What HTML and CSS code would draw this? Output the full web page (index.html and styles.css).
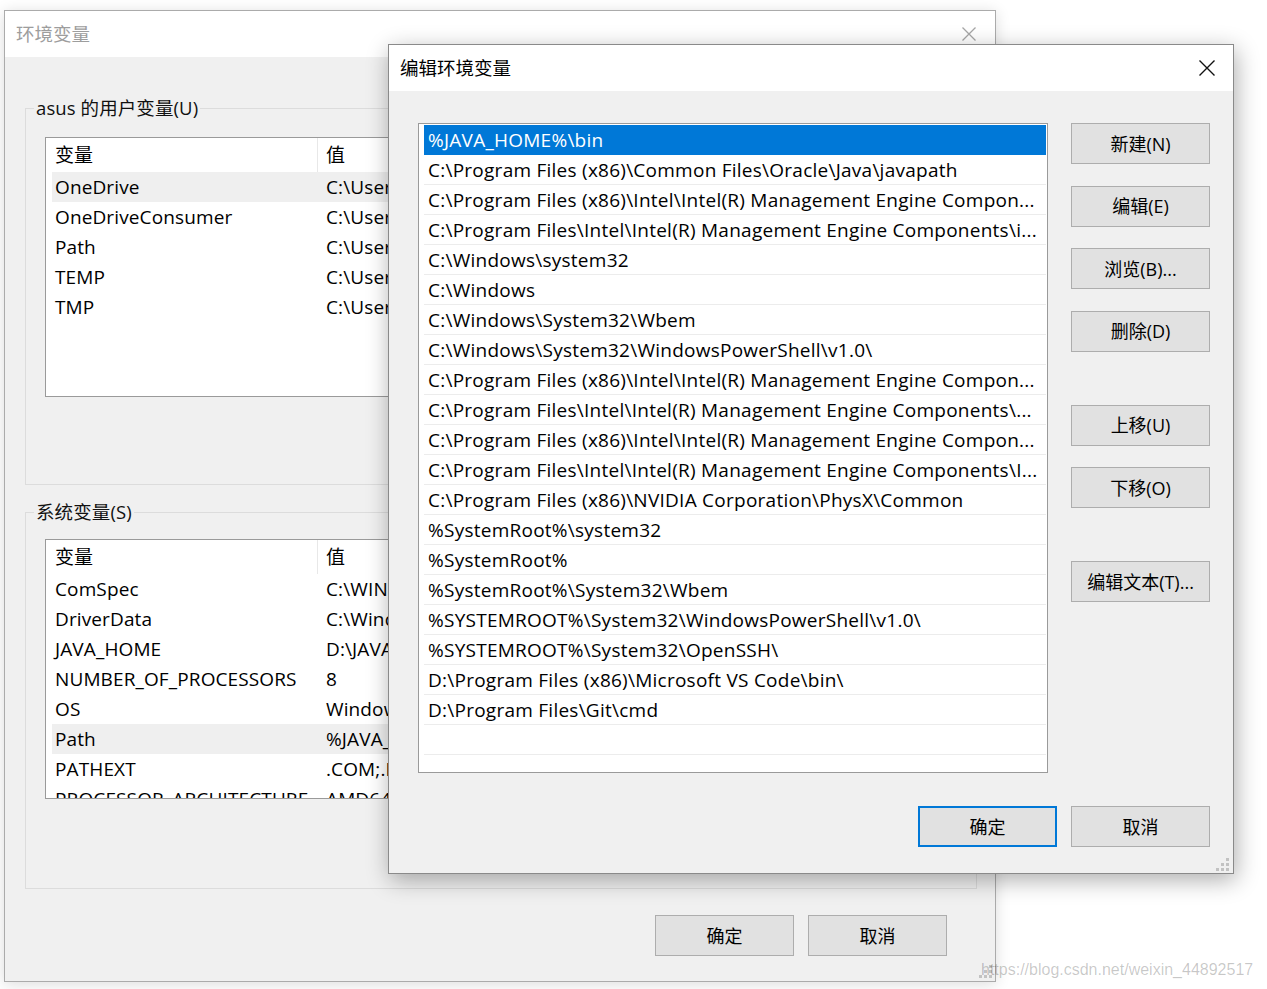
FILE: index.html
```html
<!DOCTYPE html>
<html lang="zh-CN">
<head>
<meta charset="utf-8">
<title>环境变量</title>
<link rel="stylesheet" href="styles.css">
</head>
<body>
<div class="desktop">

  <div class="win win-back">
    <div class="titlebar">
      <span class="title">环境变量</span>
      <svg class="close close-back" viewBox="0 0 14 14"><path d="M0.5 0.5L13.5 13.5M13.5 0.5L0.5 13.5" /></svg>
    </div>
    <div class="back-body">
      <fieldset class="group group-user">
        <legend>asus 的用户变量(U)</legend>
        <div class="listview">
          <div class="lv-head"><div class="h1">变量</div><div class="h2">值</div></div>
          <div class="lv-row hl"><span class="c1">OneDrive</span><span class="c2">C:\Users\asus\OneDrive</span></div>
          <div class="lv-row"><span class="c1">OneDriveConsumer</span><span class="c2">C:\Users\asus\OneDrive</span></div>
          <div class="lv-row"><span class="c1">Path</span><span class="c2">C:\Users\asus\AppData\Local\Microsoft\WindowsApps</span></div>
          <div class="lv-row"><span class="c1">TEMP</span><span class="c2">C:\Users\asus\AppData\Local\Temp</span></div>
          <div class="lv-row"><span class="c1">TMP</span><span class="c2">C:\Users\asus\AppData\Local\Temp</span></div>
        </div>
      </fieldset>
      <fieldset class="group group-sys">
        <legend>系统变量(S)</legend>
        <div class="listview">
          <div class="lv-head"><div class="h1">变量</div><div class="h2">值</div></div>
          <div class="lv-row"><span class="c1">ComSpec</span><span class="c2">C:\WINDOWS\system32\cmd.exe</span></div>
          <div class="lv-row"><span class="c1">DriverData</span><span class="c2">C:\Windows\System32\Drivers\DriverData</span></div>
          <div class="lv-row"><span class="c1">JAVA_HOME</span><span class="c2">D:\JAVA\jdk1.8</span></div>
          <div class="lv-row"><span class="c1">NUMBER_OF_PROCESSORS</span><span class="c2">8</span></div>
          <div class="lv-row"><span class="c1">OS</span><span class="c2">Windows_NT</span></div>
          <div class="lv-row hl"><span class="c1">Path</span><span class="c2">%JAVA_HOME%\bin;C:\Program Files (x86)\Common Files\Oracle\Java\javapath</span></div>
          <div class="lv-row"><span class="c1">PATHEXT</span><span class="c2">.COM;.EXE;.BAT;.CMD;.VBS;.VBE;.JS;.JSE;.WSF;.WSH;.MSC</span></div>
          <div class="lv-row"><span class="c1">PROCESSOR_ARCHITECTURE</span><span class="c2">AMD64</span></div>
        </div>
      </fieldset>
      <div class="back-footer">
        <button class="btn">确定</button>
        <button class="btn">取消</button>
      </div>
    </div>
    <svg class="grip grip-back" viewBox="0 0 13 13"><rect x="10" y="0" width="3" height="3"/><rect x="5" y="5" width="3" height="3"/><rect x="10" y="5" width="3" height="3"/><rect x="0" y="10" width="3" height="3"/><rect x="5" y="10" width="3" height="3"/><rect x="10" y="10" width="3" height="3"/></svg>
  </div>

  <div class="win win-front">
    <div class="titlebar">
      <span class="title">编辑环境变量</span>
      <svg class="close close-front" viewBox="0 0 16 16"><path d="M0.5 0.5L15.5 15.5M15.5 0.5L0.5 15.5" /></svg>
    </div>
    <div class="front-body">
      <div class="pathlist">
        <div class="item sel">%JAVA_HOME%\bin</div>
        <div class="item">C:\Program Files (x86)\Common Files\Oracle\Java\javapath</div>
        <div class="item">C:\Program Files (x86)\Intel\Intel(R) Management Engine Compon...</div>
        <div class="item">C:\Program Files\Intel\Intel(R) Management Engine Components\i...</div>
        <div class="item">C:\Windows\system32</div>
        <div class="item">C:\Windows</div>
        <div class="item">C:\Windows\System32\Wbem</div>
        <div class="item">C:\Windows\System32\WindowsPowerShell\v1.0\</div>
        <div class="item">C:\Program Files (x86)\Intel\Intel(R) Management Engine Compon...</div>
        <div class="item">C:\Program Files\Intel\Intel(R) Management Engine Components\...</div>
        <div class="item">C:\Program Files (x86)\Intel\Intel(R) Management Engine Compon...</div>
        <div class="item">C:\Program Files\Intel\Intel(R) Management Engine Components\I...</div>
        <div class="item">C:\Program Files (x86)\NVIDIA Corporation\PhysX\Common</div>
        <div class="item">%SystemRoot%\system32</div>
        <div class="item">%SystemRoot%</div>
        <div class="item">%SystemRoot%\System32\Wbem</div>
        <div class="item">%SYSTEMROOT%\System32\WindowsPowerShell\v1.0\</div>
        <div class="item">%SYSTEMROOT%\System32\OpenSSH\</div>
        <div class="item">D:\Program Files (x86)\Microsoft VS Code\bin\</div>
        <div class="item">D:\Program Files\Git\cmd</div>
        <div class="item"></div>
      </div>
      <div class="side">
        <button class="btn">新建(N)</button>
        <button class="btn">编辑(E)</button>
        <button class="btn">浏览(B)...</button>
        <button class="btn">删除(D)</button>
        <button class="btn sep">上移(U)</button>
        <button class="btn">下移(O)</button>
        <button class="btn sep">编辑文本(T)...</button>
      </div>
      <div class="front-footer">
        <button class="btn default">确定</button>
        <button class="btn">取消</button>
      </div>
    </div>
    <svg class="grip grip-front" viewBox="0 0 13 13"><rect x="10" y="0" width="3" height="3"/><rect x="5" y="5" width="3" height="3"/><rect x="10" y="5" width="3" height="3"/><rect x="0" y="10" width="3" height="3"/><rect x="5" y="10" width="3" height="3"/><rect x="10" y="10" width="3" height="3"/></svg>
  </div>

  <div class="watermark">https://blog.csdn.net/weixin_44892517</div>
</div>
</body>
</html>
```

FILE: styles.css
```css
* { box-sizing: border-box; }
html, body { margin: 0; padding: 0; background: #ffffff; }
body {
  font-family: "Open Sans", "Noto Sans CJK SC", sans-serif;
  font-size: 19px;
  color: #000;
}
.desktop { position: relative; width: 1267px; height: 989px; overflow: hidden; background: #fff; }

.win { position: absolute; display: flex; flex-direction: column; background: #f0f0f0; }
.win-back {
  left: 4px; top: 10px; width: 992px; height: 972px;
  border: 1px solid #ababab;
  box-shadow: 0 2px 14px rgba(0, 0, 0, 0.14);
}
.win-front {
  left: 388px; top: 44px; width: 846px; height: 830px;
  border: 1px solid #8a8a8a;
  box-shadow: 2px 6px 22px rgba(0, 0, 0, 0.32);
}

.titlebar {
  height: 46px; flex: none; background: #fff;
  display: flex; align-items: center; justify-content: space-between;
  padding-left: 11px;
}
.title { font-size: 18.5px; line-height: 24px; }
.win-back .title { color: #9d9d9d; }
.close { flex: none; fill: none; }
.close-back { width: 14px; height: 14px; margin-right: 19px; stroke: #a6a6a6; stroke-width: 1.3; }
.close-front { width: 16px; height: 16px; margin-right: 18px; stroke: #111; stroke-width: 1.4; }

.back-body { flex: 1; display: flex; flex-direction: column; padding: 39px 18px 0 20px; }
.group { margin: 0; padding: 0; border: 1px solid #dcdcdc; min-width: 0; }
.group legend { margin-left: 8px; padding: 0 2px; line-height: 24px; font-size: 18.5px; color: #111; letter-spacing: 0.1px; }
.group-user .listview { margin: 17px 19px 87px 19px; }
.group-sys { margin-top: 15px; }
.group-sys .listview { margin: 15px 19px 89px 19px; }

.listview { height: 260px; background: #fff; border: 1px solid #9a9a9a; overflow: hidden; }
.lv-head { height: 34px; display: flex; }
.lv-head .h1 { width: 272px; padding-left: 9px; border-right: 1px solid #e8e8e8; line-height: 34px; }
.lv-head .h2 { padding-left: 8px; line-height: 34px; }
.lv-row { height: 30px; display: flex; margin-left: 6px; line-height: 30px; white-space: nowrap; letter-spacing: 0.12px; }
.lv-row .c1 { flex: none; width: 265px; padding-left: 3px; overflow: hidden; }
.lv-row .c2 { padding-left: 9px; }
.lv-row.hl { background: #efefef; }

.back-footer { display: flex; justify-content: flex-end; gap: 14px; margin-top: 26px; padding-right: 30px; }

.btn {
  width: 139px; height: 41px; padding: 0 0 2px 0;
  background: #e1e1e1; border: 1px solid #adadad;
  font: inherit; font-size: 18px; color: #000;
  flex: none;
}
.btn.default { border: 2px solid #0078d7; }

.front-body {
  flex: 1; display: grid;
  grid-template-columns: 630px 139px; column-gap: 23px;
  align-content: start;
  padding: 32px 22px 0 29px;
}
.pathlist { height: 650px; border: 1px solid #9a9a9a; background: #fff; padding: 1px 1px 0 5px; overflow: hidden; }
.item {
  height: 30px; border-bottom: 1px solid #ececec;
  padding: 0 6px 0 4px; line-height: 30px;
  white-space: nowrap; overflow: hidden; text-overflow: ellipsis;
  letter-spacing: 0.25px;
}
.item.sel { background: #0078d7; color: #fff; border-bottom-color: #0078d7; }

.side { display: flex; flex-direction: column; gap: 21.5px; padding-top: 0; }
.side .sep { margin-top: 31.5px; }

.front-footer { grid-column: 1 / -1; display: flex; justify-content: flex-end; gap: 14px; margin-top: 33px; }

.grip { position: absolute; width: 13px; height: 13px; fill: #c2c2c2; }
.grip-front { right: 4px; bottom: 2px; }
.grip-back { right: 3px; bottom: 3px; }

.watermark {
  position: absolute; left: 981px; top: 960px;
  font-family: "Liberation Sans", Arial, sans-serif; font-size: 16px; line-height: 20px;
  color: rgba(0, 0, 0, 0.22);
  white-space: nowrap;
}
```
